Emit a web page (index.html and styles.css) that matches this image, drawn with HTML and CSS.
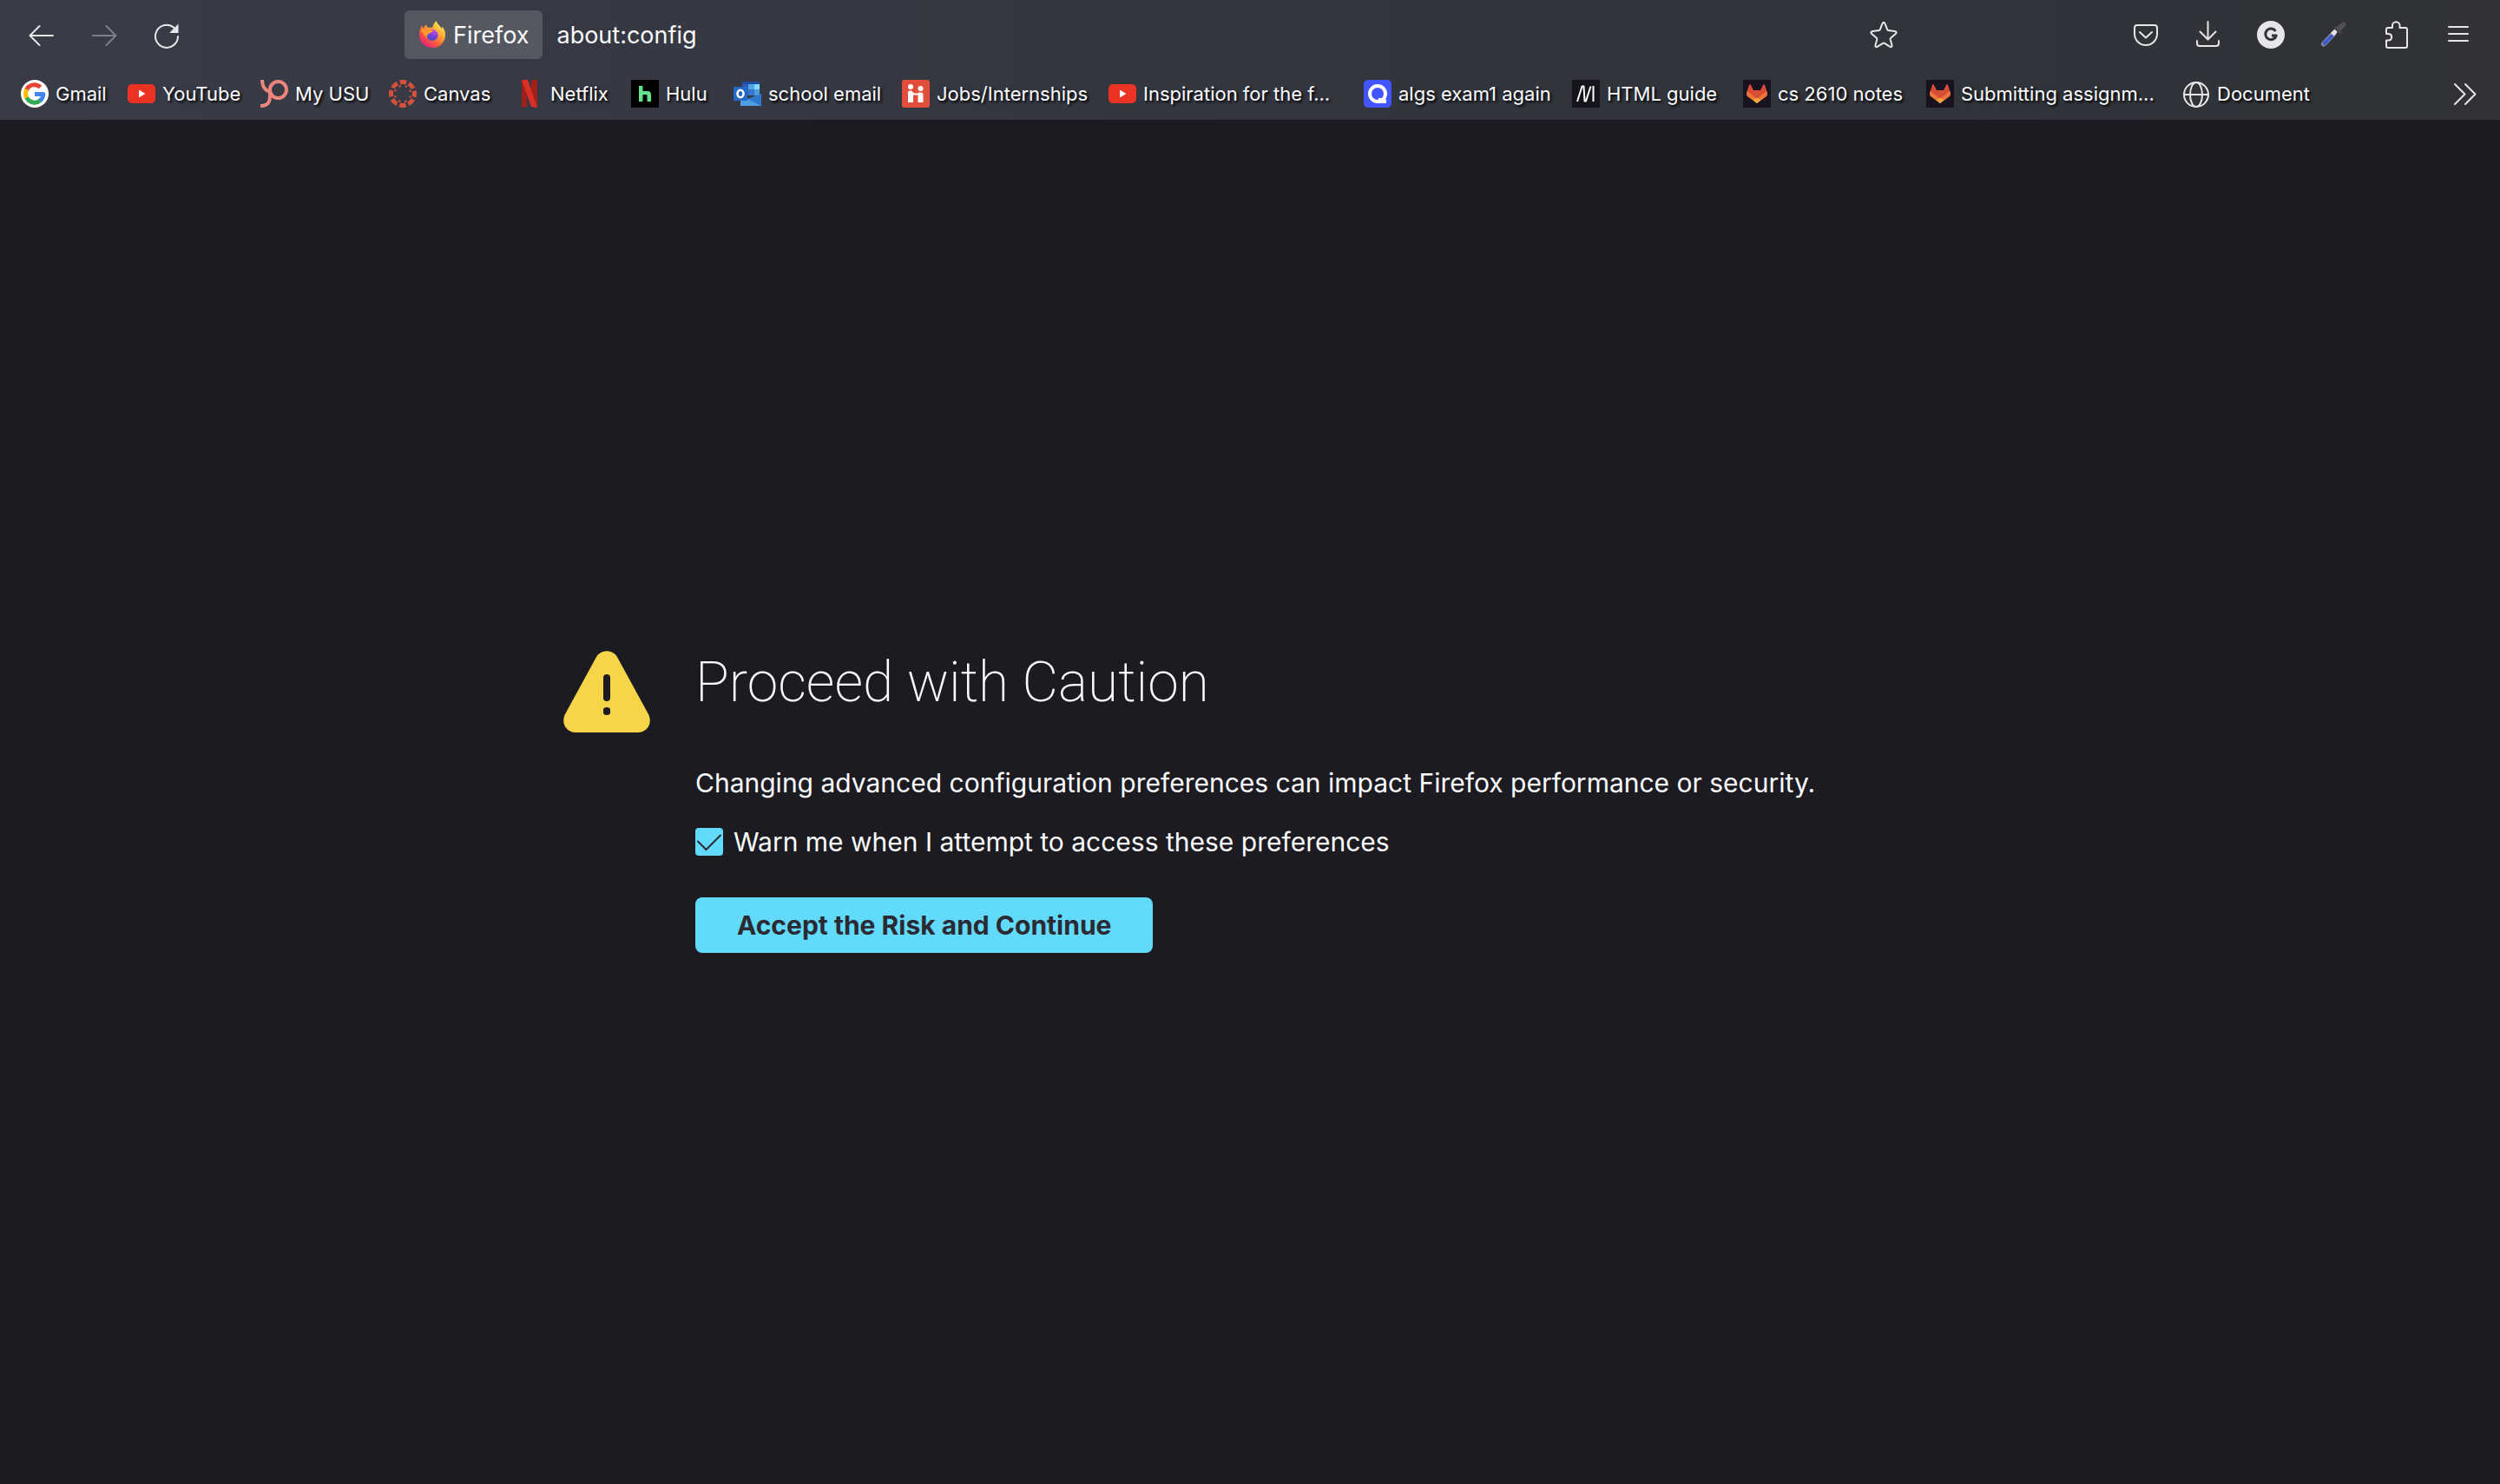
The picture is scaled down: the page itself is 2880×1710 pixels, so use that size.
FILE: index.html
```html
<!DOCTYPE html>
<html lang="en">
<head>
<meta charset="utf-8">
<title>about:config</title>
<link rel="stylesheet" href="styles.css">
</head>
<body>
<header class="chrome">
  <nav class="toolbar" aria-label="Navigation">
    <div class="nav-buttons">
      <button class="tool" type="button" aria-label="Back"><svg class="icon" viewBox="0 0 32 32"><path d="M29 17H3M13.500 6L2.500 17L13.500 28"/></svg></button>
      <button class="tool" type="button" aria-label="Forward" disabled><svg class="icon" viewBox="0 0 32 32"><path d="M3 17H29M18.500 6L29.500 17L18.500 28"/></svg></button>
      <button class="tool" type="button" aria-label="Reload"><svg class="icon" viewBox="0 0 32 32"><path d="M29 18A13 13 0 1 1 24.500 8"/><path class="solid" d="M29.500 4V14H20Q19.500 13.500 20 13L29 4Q29.500 3.600 29.500 4Z"/></svg></button>
    </div>
    <div class="urlbar">
      <button class="identity" type="button">
        <svg class="icon" viewBox="0 0 32 32">
          <defs>
            <linearGradient id="fx-body" x1="0.9" y1="0.1" x2="0.2" y2="1"><stop offset="0" stop-color="#fff44f"/><stop offset="0.35" stop-color="#ffa436"/><stop offset="0.65" stop-color="#ff5a3c"/><stop offset="1" stop-color="#e31587"/></linearGradient>
            <radialGradient id="fx-globe" cx="0.7" cy="0.2" r="0.9"><stop offset="0" stop-color="#b84bff"/><stop offset="0.6" stop-color="#6b3fd0"/><stop offset="1" stop-color="#3f57c8"/></radialGradient>
          </defs>
          <path class="plain" fill="url(#fx-body)" d="M20.500 0C19 2 16.500 4.500 16.500 7.500L12 8C10 7 9.500 6 9 4.500C7.500 5.500 6.500 7 6 8.500C4.500 8 4.500 6.500 4 5C2.500 8 1 12 1 16C1 25 8 31 16 31C25 31 31 24.500 31 16C31 11.500 29 8 27 6.500C27.300 8 27.200 8.500 27 9.500C25.500 5.500 21.500 4 20.500 0Z"/>
          <circle class="plain" fill="url(#fx-globe)" cx="16" cy="16.500" r="6.500"/>
          <path class="plain" fill="#ff9a2e" d="M2 12C4 9 8 8 11.500 9.500C14 10.500 16.500 11 17.500 11.500C16.500 13.500 13.500 13 12.500 15C11 15 9 17.500 10 20C6 18 7 13 2 12Z"/>
        </svg>
        <span>Firefox</span>
      </button>
      <input class="address" type="text" value="about:config" aria-label="Address">
      <button class="tool" type="button" aria-label="Bookmark this page"><svg class="icon" viewBox="0 0 32 32"><path d="M14.500 3.200Q16 0.200 17.500 3.200L20.300 10.300Q20.500 11 21.300 11.100L28.800 12Q32 12.600 29.700 15L24 20Q23.500 20.400 23.600 21.200L25.500 28Q26 31.200 23 29.700L17 25.800Q16 25.200 15 25.800L9 29.700Q6 31.200 6.500 28L8.400 21.200Q8.500 20.400 8 20L2.300 15Q0 12.600 3.200 12L10.700 11.100Q11.500 11 11.700 10.300Z"/></svg></button>
    </div>
    <div class="extensions">
      <button class="tool" type="button" aria-label="Save to Pocket"><svg class="icon" viewBox="0 0 32 32"><path d="M6 5H26Q29 5 29 8V15A13 13 0 0 1 3 15V8Q3 5 6 5ZM9 13L16 19.500L23 13"/></svg></button>
      <button class="tool" type="button" aria-label="Downloads"><svg class="icon" viewBox="0 0 32 32"><path d="M15.500 1V21M6.500 12.500L15.500 21.500L24.500 12.500M3 23V26Q3 29 6 29H25Q28 29 28 26V23"/></svg></button>
      <button class="tool" type="button" aria-label="Grammar assistant"><svg class="icon" viewBox="0 0 32 32"><circle class="solid" cx="16" cy="16" r="16"/><path class="letter" d="M21.500 12A6.300 6.300 0 1 0 22.200 17H17"/></svg></button>
      <button class="tool" type="button" aria-label="Color picker"><svg class="icon" viewBox="0 0 32 32"><path stroke="#8b8f99" stroke-width="6" d="M5 26.500L16 15"/><path stroke="#e4e6ec" stroke-width="5" d="M16 14.500L18 12.500"/><path stroke="#3f5bd0" stroke-width="4" d="M5.500 26L14 17.500"/><path stroke="#444" stroke-width="4" d="M18.500 8L24 13"/><path stroke="#505050" stroke-width="6" d="M23 8.500L27.500 4.500"/></svg></button>
      <button class="tool" type="button" aria-label="Extensions"><svg class="icon" viewBox="0 0 32 32"><path d="M12 8V5.500A4 4 0 0 1 20.500 5.500V8H27Q29 8 29 10V29Q29 31 27 31H7Q5 31 5 29V22.500H8A3.800 3.800 0 0 0 8 15H5V10Q5 8 7 8Z"/></svg></button>
      <button class="tool" type="button" aria-label="Open application menu"><svg class="icon" viewBox="0 0 32 32"><path d="M5 7H27M5 15H27M5 23H27"/></svg></button>
    </div>
  </nav>
  <nav class="bookmarks" aria-label="Bookmarks">
    <a class="bookmark" href="#"><svg class="icon" viewBox="0 0 32 32"><circle class="plain" fill="#fff" cx="16" cy="16" r="16"/><g stroke-width="5" stroke-linecap="butt"><path stroke="#ea4335" d="M6.500 11.500A10 10 0 0 1 22.500 8.500"/><path stroke="#fbbc05" d="M7 21A10 10 0 0 1 7 11"/><path stroke="#34a853" d="M22.500 23.600A10 10 0 0 1 6.800 20.500"/><path stroke="#4285f4" d="M16 16.500H25.800A10 10 0 0 1 22 24"/></g></svg><span>Gmail</span></a>
    <a class="bookmark" href="#"><svg class="icon" viewBox="0 0 32 32"><rect class="plain" fill="#ea3323" y="5" width="32" height="22" rx="5"/><path class="plain" fill="#fff" d="M13 11.500V20.500L20.500 16Z"/></svg><span>YouTube</span></a>
    <a class="bookmark" href="#"><svg class="icon" viewBox="0 0 32 32"><g stroke="#ee857d" stroke-width="4" stroke-linecap="butt"><circle cx="20.500" cy="11.500" r="9.500"/><path d="M2 0C2 8 6 13 12 14M11 11C11 20 13 30 0 30"/></g></svg><span>My USU</span></a>
    <a class="bookmark" href="#"><svg class="icon" viewBox="0 0 32 32"><circle cx="16" cy="16" r="13.500" stroke="#d5503c" stroke-width="5" stroke-linecap="butt" stroke-dasharray="7.600 3" stroke-dashoffset="3.800"/><circle cx="16" cy="16" r="9.300" stroke="#d5503c" stroke-width="2.500" stroke-linecap="round" stroke-dasharray="0.100 7.200" stroke-dashoffset="3.600"/></svg><span>Canvas</span></a>
    <a class="bookmark" href="#"><svg class="icon" viewBox="0 0 32 32"><path class="plain" fill="#a0201b" d="M7 0H13V31L7 32ZM18 0H25V32L18 30Z"/><path class="plain" fill="#d82f27" d="M7 0H14L25 32L18 31Z"/></svg><span>Netflix</span></a>
    <a class="bookmark" href="#"><svg class="icon" viewBox="0 0 32 32"><rect class="plain" fill="#000" width="32" height="32"/><path class="plain" fill="#66e08a" d="M9 7H13.500V13H19Q23 13 23 17V25H18.500V18Q18.500 17 17.500 17H14.500Q13.500 17 13.500 18V25H9Z"/></svg><span>Hulu</span></a>
    <a class="bookmark" href="#"><svg class="icon" viewBox="0 0 32 32"><path class="plain" fill="#2a5db0" d="M10 2H30V18H10Z"/><path class="plain" fill="#1f4e9e" d="M10 2H30V5H10Z"/><path class="plain" fill="#50a5e8" d="M17 5H24V11H17Z"/><path class="plain" fill="#7ddcff" d="M24 5H30V11H24Z"/><path class="plain" fill="#3577cf" d="M17 11H24V18H17Z"/><path class="plain" fill="#4a9de0" d="M24 11H30V18H24Z"/><path class="plain" fill="#4b9fe2" d="M8 20L18 22L32 16V30H8Z"/><path class="plain" fill="#2f78cf" d="M16 22L32 16V30Z"/><rect class="plain" fill="#2468c8" y="8" width="16" height="16" rx="1"/><ellipse cx="8" cy="16" rx="3.500" ry="4.200" stroke="#fff" stroke-width="2.500"/></svg><span>school email</span></a>
    <a class="bookmark" href="#"><svg class="icon" viewBox="0 0 32 32"><rect class="plain" fill="#e34d3c" width="32" height="32" rx="3"/><g class="plain" fill="#fff"><circle cx="10" cy="8" r="3"/><circle cx="21.500" cy="10" r="3"/><path d="M7 14.500Q7 12.500 9 12.500H11L14 15.500H18.500L20 14.500H22.500Q24.500 14.500 24.500 17V26H18.500V17.500H13V26H7Z"/></g></svg><span>Jobs/Internships</span></a>
    <a class="bookmark" href="#"><svg class="icon" viewBox="0 0 32 32"><rect class="plain" fill="#ea3323" y="5" width="32" height="22" rx="5"/><path class="plain" fill="#fff" d="M13 11.500V20.500L20.500 16Z"/></svg><span>Inspiration for the f...</span></a>
    <a class="bookmark" href="#"><svg class="icon" viewBox="0 0 32 32"><rect class="plain" fill="#4255ff" width="32" height="32" rx="5"/><circle cx="16" cy="16" r="9" stroke="#fff" stroke-width="4"/><path class="plain" fill="#fff" d="M17 21H23L26 23V27H16Z"/></svg><span>algs exam1 again</span></a>
    <a class="bookmark" href="#"><svg class="icon" viewBox="0 0 32 32"><rect class="plain" fill="#15141a" width="32" height="32"/><path stroke="#fff" stroke-linecap="butt" d="M6 25L11.500 7.500H13.500L14.500 24.500H16L21.500 7.500M24.500 7V25"/></svg><span>HTML guide</span></a>
    <a class="bookmark" href="#"><svg class="icon" viewBox="0 0 32 32"><rect class="plain" fill="#171321" width="32" height="32"/><path class="plain" fill="#d84d36" d="M7 6Q8 4 9 6L12 12H20L23 6Q24 4 25 6L28 15L16 27L4 15Z"/><path class="plain" fill="#ee7639" d="M5 13L16 22L27 13Q29 17 27 19L16 27L5 19Q3 17 5 13Z"/><path class="plain" fill="#f3a63c" d="M11.500 23.500L16 20.500L20.500 23.500L16 27Z"/></svg><span>cs 2610 notes</span></a>
    <a class="bookmark" href="#"><svg class="icon" viewBox="0 0 32 32"><rect class="plain" fill="#171321" width="32" height="32"/><path class="plain" fill="#d84d36" d="M7 6Q8 4 9 6L12 12H20L23 6Q24 4 25 6L28 15L16 27L4 15Z"/><path class="plain" fill="#ee7639" d="M5 13L16 22L27 13Q29 17 27 19L16 27L5 19Q3 17 5 13Z"/><path class="plain" fill="#f3a63c" d="M11.500 23.500L16 20.500L20.500 23.500L16 27Z"/></svg><span>Submitting assignm...</span></a>
    <a class="bookmark" href="#"><svg class="icon" viewBox="0 0 32 32"><circle cx="16" cy="17" r="14"/><ellipse cx="16" cy="17" rx="7" ry="14"/><path d="M2 17H30"/></svg><span>Document</span></a>
    <button class="tool overflow" type="button" aria-label="Show more bookmarks"><svg class="icon" viewBox="0 0 32 32"><path d="M4 5L15.500 16.500L4 28M16 5L27.500 16.500L16 28"/></svg></button>
  </nav>
</header>
<main class="page">
  <section class="warning">
    <svg class="warning-icon" viewBox="0 0 100 94" aria-hidden="true"><path fill="#f6d549" d="M38 7C43-2 57-2 62 7L98 73C103 83 97 94 86 94H14C3 94-3 83 2 73Z"/><path fill="#1c1b22" d="M46 31Q46 27 50 27T54 31V54Q54 58 50 58T46 54ZM46 68Q46 65 50 65T54 68V71Q54 74 50 74T46 71Z"/></svg>
    <h1 class="title">Proceed with Caution</h1>
    <div class="details">
      <p class="message">Changing advanced configuration preferences can impact Firefox performance or security.</p>
      <div class="option">
        <input class="check" type="checkbox" id="warn" checked>
        <label for="warn">Warn me when I attempt to access these preferences</label>
      </div>
      <button class="accept" type="button">Accept the Risk and Continue</button>
    </div>
  </section>
</main>
</body>
</html>
```
FILE: styles.css
```css
* {
  box-sizing: border-box;
}

body {
  margin: 0;
  min-height: 100vh;
  display: flex;
  flex-direction: column;
  background: #1c1b22;
  color: #fbfbfe;
  font-family: Inter, "Liberation Sans", sans-serif;
  font-size: 30px;
}

button,
input {
  font: inherit;
  color: inherit;
  margin: 0;
}

.chrome {
  background: linear-gradient(90deg, #393b47, #31343c 65%, #303237);
}

.toolbar {
  display: flex;
  align-items: center;
  height: 80px;
  padding: 0 32px;
  font-size: 27px;
}

.nav-buttons,
.extensions {
  display: flex;
  gap: 40px;
}

.tool {
  display: flex;
  padding: 0;
  border: 0;
  background: none;
}

.tool:disabled {
  opacity: 0.4;
}

.icon {
  flex: none;
  width: 32px;
  height: 32px;
  fill: none;
  stroke: #e6e6e8;
  stroke-width: 2;
  stroke-linecap: round;
  stroke-linejoin: round;
}

.icon .solid {
  fill: #e6e6e8;
  stroke: none;
}

.icon .plain {
  stroke: none;
}

.icon .letter {
  stroke: #30333b;
  stroke-width: 3;
  stroke-linecap: butt;
}

.urlbar {
  flex: 1;
  display: flex;
  align-items: center;
  gap: 16px;
  margin: 0 270px 0 258px;
}

.identity {
  display: flex;
  align-items: center;
  gap: 8px;
  height: 56px;
  padding: 0 16px;
  border: 0;
  border-radius: 6px;
  background: #555861;
  color: #fbfbfe;
}

.address {
  flex: 1;
  min-width: 0;
  padding: 0;
  border: 0;
  background: none;
}

.bookmarks {
  display: grid;
  grid-template-columns: 123px 153px 148px 146px 133px 118px 194px 238px 294px 240px 197px 211px 295px 1fr auto;
  align-items: center;
  height: 58px;
  padding: 0 24px 2px;
  font-size: 22px;
}

.bookmark {
  display: flex;
  align-items: center;
  gap: 8px;
  color: #fbfbfe;
  text-decoration: none;
  text-shadow: 2px 2px 3px #000;
  white-space: nowrap;
}

.page {
  flex: 1;
  display: grid;
  align-items: center;
}

.warning {
  display: grid;
  grid-template-columns: 1fr minmax(0, 1278px) 1fr;
  column-gap: 52px;
  row-gap: 40px;
}

.warning-icon {
  justify-self: end;
  width: 100px;
  height: 94px;
}

.title {
  margin: 0;
  font-family: Roboto, Inter, sans-serif;
  font-size: 64px;
  font-weight: 200;
  line-height: 74px;
}

.details {
  grid-column: 2;
  display: flex;
  flex-direction: column;
  align-items: flex-start;
}

.message {
  margin: 0 0 32px;
  line-height: 36px;
  white-space: nowrap;
}

.option {
  display: flex;
  align-items: center;
  gap: 12px;
  margin-bottom: 46px;
  line-height: 36px;
}

.check {
  appearance: none;
  width: 32px;
  height: 32px;
  border-radius: 4px;
  background: #61dafb;
}

.check:checked {
  background-image: url("data:image/svg+xml,%3Csvg xmlns='http://www.w3.org/2000/svg' viewBox='0 0 32 32'%3E%3Cpath d='M3 15.500L12.500 25L29 8.500' fill='none' stroke='%232b2a33' stroke-width='2' stroke-linecap='round'/%3E%3C/svg%3E");
}

.accept {
  height: 64px;
  padding: 0 48px;
  border: 0;
  border-radius: 8px;
  background: #61dafb;
  color: #2b2a33;
  font-weight: 700;
}
```
